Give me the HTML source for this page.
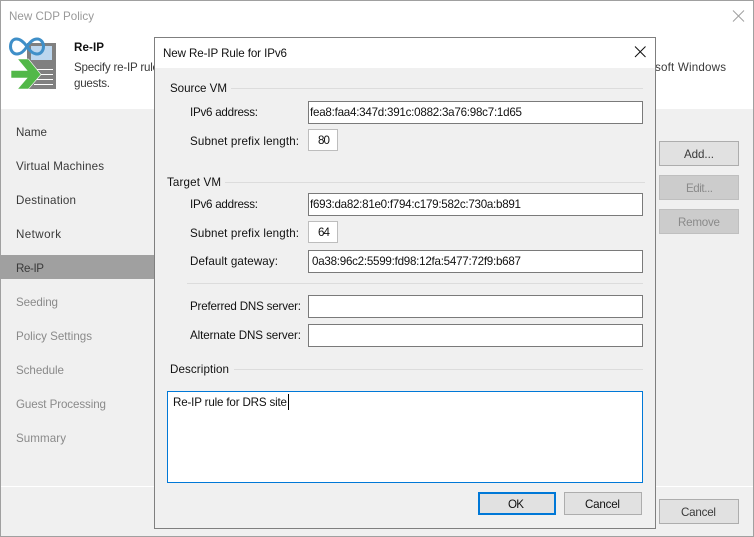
<!DOCTYPE html>
<html>
<head>
<meta charset="utf-8">
<title>New CDP Policy</title>
<style>
html,body{margin:0;padding:0;width:754px;height:537px;overflow:hidden;background:#f0f0f0}
svg{display:block}
text{font-family:"Liberation Sans",sans-serif;font-size:11.6px;fill:#111}
.n{fill:#3a3a3a}
.d{fill:#8a8a8a}
.b{fill:#e1e1e1;stroke:#adadad}
.i{fill:#fff;stroke:#7a7a7a}
.p{fill:#fff;stroke:#bdbdbd}
.l{stroke:#dcdcdc;stroke-width:1}
</style>
</head>
<body>
<svg width="754" height="537" viewBox="0 0 754 537" xmlns="http://www.w3.org/2000/svg">
<!-- main window -->
<rect x="0" y="0" width="754" height="537" fill="#f0f0f0"/>
<rect x="1" y="1" width="752" height="108" fill="#fff"/>
<rect x="0.5" y="0.5" width="753" height="536" fill="none" stroke="#a0a0a0"/>
<text x="9" y="20" textLength="85" lengthAdjust="spacing" style="fill:#999">New CDP Policy</text>
<path d="M733 10.5L744 21.5M744 10.5L733 21.5" stroke="#a0a0a0" stroke-width="1" fill="none"/>

<!-- header icon -->
<rect x="27" y="43" width="29" height="46" fill="#808080"/>
<rect x="31" y="46" width="21" height="14" fill="#bcd6ee"/>
<path d="M34 69.500H53M34 74.500H53M34 79.500H53M34 84.500H53" stroke="#fff" stroke-width="1" fill="none"/>
<path d="M27 46.500C23 41 19.500 39 16.500 39C12.500 39 10.500 42.500 10.500 46.500C10.500 50.500 13 54 17 54C20 54 23.500 52 27 46.500C30.500 41 34 39 37 39C41 39 43.500 42.500 43.500 46.500C43.500 50.500 41 54 37 54C34 54 30.500 52 27 46.500Z" fill="none" stroke="#3f8fc8" stroke-width="3"/>
<path d="M17.500 59L28.500 59L41 74.500L28.500 89L17.500 89L27 78L11 78L11 70.500L27 70.500Z" fill="#52b848" stroke="#fff" stroke-width="0.600"/>

<text x="74" y="51" textLength="30" lengthAdjust="spacing" style="font-weight:bold">Re-IP</text>
<text x="74" y="71" class="n" textLength="85" lengthAdjust="spacing">Specify re-IP rule</text>
<text x="655" y="71" class="n" textLength="71" lengthAdjust="spacing">soft Windows</text>
<text x="74" y="87" class="n" textLength="36" lengthAdjust="spacing">guests.</text>

<!-- navigation -->
<rect x="1" y="255" width="153" height="24" fill="#a0a0a0"/>
<text x="16" y="136" class="n" textLength="31" lengthAdjust="spacing">Name</text>
<text x="16" y="170" class="n" textLength="88" lengthAdjust="spacing">Virtual Machines</text>
<text x="16" y="204" class="n" textLength="60" lengthAdjust="spacing">Destination</text>
<text x="16" y="238" class="n" textLength="45" lengthAdjust="spacing">Network</text>
<text x="16" y="272" class="n" textLength="28" lengthAdjust="spacing">Re-IP</text>
<text x="16" y="306" class="d" textLength="42" lengthAdjust="spacing">Seeding</text>
<text x="16" y="340" class="d" textLength="76" lengthAdjust="spacing">Policy Settings</text>
<text x="16" y="374" class="d" textLength="48" lengthAdjust="spacing">Schedule</text>
<text x="16" y="408" class="d" textLength="90" lengthAdjust="spacing">Guest Processing</text>
<text x="16" y="442" class="d" textLength="50" lengthAdjust="spacing">Summary</text>

<!-- right buttons -->
<rect x="659.500" y="141.500" width="79" height="24" class="b"/>
<text x="684" y="158" class="n" textLength="30" lengthAdjust="spacing">Add...</text>
<rect x="659.500" y="175.500" width="79" height="24" fill="#cccccc" stroke="#bfbfbf"/>
<text x="686" y="192" class="d" textLength="27" lengthAdjust="spacing">Edit...</text>
<rect x="659.500" y="209.500" width="79" height="24" fill="#cccccc" stroke="#bfbfbf"/>
<text x="678" y="226" class="d" textLength="42" lengthAdjust="spacing">Remove</text>

<!-- bottom of main window -->
<path d="M1 486.500H753" stroke="#fff"/>
<rect x="659.500" y="499.500" width="79" height="24" class="b"/>
<text x="681" y="516" class="n" textLength="35" lengthAdjust="spacing">Cancel</text>

<!-- dialog -->
<rect x="154.500" y="37.500" width="501" height="491" fill="#f0f0f0" stroke="#7f7f7f"/>
<rect x="155" y="38" width="500" height="30" fill="#fff"/>
<text x="163" y="57" textLength="124" lengthAdjust="spacing">New Re-IP Rule for IPv6</text>
<path d="M635 46.500L645.500 57M645.500 46.500L635 57" stroke="#111" stroke-width="1" fill="none"/>

<text x="170" y="92" textLength="57" lengthAdjust="spacing">Source VM</text>
<path d="M231 88.500H643" class="l"/>
<text x="190" y="116" textLength="68" lengthAdjust="spacing">IPv6 address:</text>
<rect x="308.500" y="101.500" width="334" height="22" class="i"/>
<text x="310" y="116" textLength="212" lengthAdjust="spacing">fea8:faa4:347d:391c:0882:3a76:98c7:1d65</text>
<text x="190" y="145" textLength="109" lengthAdjust="spacing">Subnet prefix length:</text>
<rect x="308.500" y="129.500" width="29" height="21" class="p"/>
<text x="318" y="144" textLength="12" lengthAdjust="spacing">80</text>

<text x="167" y="186" textLength="54" lengthAdjust="spacing">Target VM</text>
<path d="M225 182.500H645" class="l"/>
<text x="190" y="208" textLength="68" lengthAdjust="spacing">IPv6 address:</text>
<rect x="308.500" y="193.500" width="334" height="22" class="i"/>
<text x="310" y="208" textLength="211" lengthAdjust="spacing">f693:da82:81e0:f794:c179:582c:730a:b891</text>
<text x="190" y="237" textLength="109" lengthAdjust="spacing">Subnet prefix length:</text>
<rect x="308.500" y="221.500" width="29" height="21" class="p"/>
<text x="318" y="236" textLength="12" lengthAdjust="spacing">64</text>
<text x="190" y="265" textLength="88" lengthAdjust="spacing">Default gateway:</text>
<rect x="308.500" y="250.500" width="334" height="22" class="i"/>
<text x="312" y="265" textLength="209" lengthAdjust="spacing">0a38:96c2:5599:fd98:12fa:5477:72f9:b687</text>

<path d="M187 283.500H643" class="l"/>

<text x="190" y="310" textLength="111" lengthAdjust="spacing">Preferred DNS server:</text>
<rect x="308.500" y="295.500" width="334" height="22" class="i"/>
<text x="190" y="339" textLength="111" lengthAdjust="spacing">Alternate DNS server:</text>
<rect x="308.500" y="324.500" width="334" height="22" class="i"/>

<text x="170" y="373" textLength="59" lengthAdjust="spacing">Description</text>
<path d="M234 369.500H643" class="l"/>
<rect x="167.500" y="391.500" width="475" height="91" fill="#fff" stroke="#0078d7"/>
<text x="173" y="406" textLength="114" lengthAdjust="spacing">Re-IP rule for DRS site</text>
<path d="M288.500 394V410" stroke="#000"/>

<rect x="479" y="493" width="76" height="21" fill="#e1e1e1" stroke="#0078d7" stroke-width="2"/>
<text x="508" y="508" textLength="16" lengthAdjust="spacing">OK</text>
<rect x="564.500" y="492.500" width="77" height="22" class="b"/>
<text x="585" y="508" textLength="35" lengthAdjust="spacing">Cancel</text>
</svg>
</body>
</html>
